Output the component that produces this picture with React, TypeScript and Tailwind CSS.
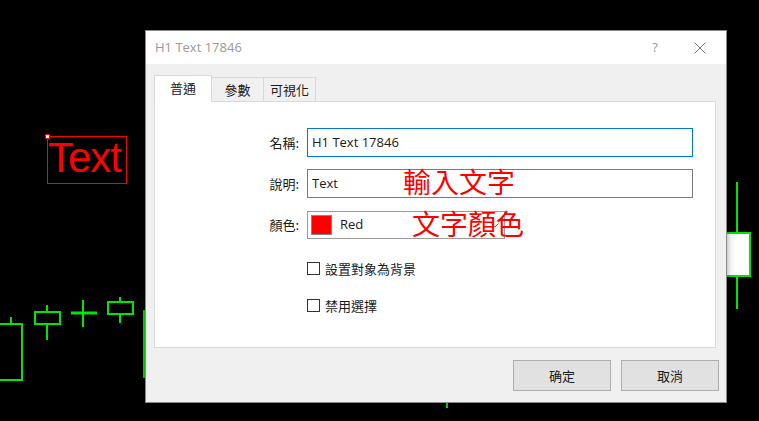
import React from "react";

const UI = { fontFamily: '"Open Sans", "Noto Sans CJK TC", sans-serif' };
const CJK = { fontFamily: '"Noto Sans CJK TC", "Open Sans", sans-serif' };

// Candles behind the dialog, drawn as one chart layer.
function Chart() {
  const g = "#00e600";
  return (
    <svg className="absolute inset-0" width={759} height={421} viewBox="0 0 759 421">
      <line x1={11} y1={317} x2={11} y2={323} stroke={g} strokeWidth={2} />
      <rect x={-2} y={324} width={24} height={56} fill="none" stroke={g} strokeWidth={2} />
      <line x1={47} y1={305} x2={47} y2={340} stroke={g} strokeWidth={2} />
      <rect x={35} y={312} width={25} height={12} fill="#000" stroke={g} strokeWidth={2} />
      <line x1={71} y1={313} x2={97} y2={313} stroke={g} strokeWidth={3} />
      <line x1={83} y1={300} x2={83} y2={327} stroke={g} strokeWidth={2} />
      <line x1={120} y1={297} x2={120} y2={323} stroke={g} strokeWidth={2} />
      <rect x={108} y={302} width={25} height={12} fill="#000" stroke={g} strokeWidth={2} />
      <rect x={144} y={311} width={30} height={66} fill="none" stroke={g} strokeWidth={2} />
      <line x1={737} y1={182} x2={737} y2={309} stroke={g} strokeWidth={2} />
      <defs>
        <linearGradient id="shade" x1="0" x2="1" y1="0" y2="0">
          <stop offset="0" stopColor="#bdbdbd" />
          <stop offset="0.55" stopColor="#ffffff" />
        </linearGradient>
      </defs>
      <rect x={705} y={233} width={45} height={43} fill="url(#shade)" stroke={g} strokeWidth={2} />
      <line x1={447} y1={402} x2={447} y2={408} stroke={g} strokeWidth={2} />
    </svg>
  );
}

function Field({ label, children }: { label: string; children: React.ReactNode }) {
  return (
    <div className="flex items-center">
      <span className="w-[145px] pr-px text-right text-[13px] text-[#1a1a1a]" style={CJK}>
        {label}
      </span>
      <div className="ml-[7px]">{children}</div>
    </div>
  );
}

function Check({ label }: { label: string }) {
  return (
    <div className="ml-[152px] flex items-center gap-[5px]">
      <span className="h-[13px] w-[13px] border border-[#333] bg-white" />
      <span className="text-[13px] leading-[15px] text-[#1a1a1a]" style={CJK}>
        {label}
      </span>
    </div>
  );
}

function Dialog() {
  return (
    <div
      className="absolute left-[145px] top-[30px] flex h-[373px] w-[582px] flex-col border border-[#8a8a8a] bg-[#f0f0f0] shadow-[0_0_8px_rgba(0,0,0,0.35)]"
      style={UI}
    >
      <div className="flex h-[33px] items-center bg-white pl-[9px]">
        <span className="flex-1 text-[13px] text-[#999]">H1 Text 17846</span>
        <span className="w-[20px] text-center text-[13px] text-[#9a9a9a]">?</span>
        <span className="ml-[28px] mr-[19px] flex w-[14px] justify-center">
          <svg width={12} height={12} viewBox="0 0 12 12">
            <path d="M0.5 0.5 L11.5 11.5 M11.5 0.5 L0.5 11.5" stroke="#777" strokeWidth={1} />
          </svg>
        </span>
      </div>

      <div className="flex flex-1 flex-col pl-[8px] pt-[11px]">
        <div className="relative z-10 flex items-start">
          <div
            className="flex h-[27px] w-[58px] items-center justify-center border border-b-0 border-[#d9d9d9] bg-white pb-[3px] text-[13px] text-[#1a1a1a]"
            style={CJK}
          >
            普通
          </div>
          <div
            className="mt-[2px] flex h-[24px] w-[52px] items-center justify-center border border-l-0 border-b-0 border-[#d9d9d9] text-[13px] text-[#1a1a1a]"
            style={CJK}
          >
            參數
          </div>
          <div
            className="mt-[2px] flex h-[24px] w-[52px] items-center justify-center border border-l-0 border-b-0 border-[#d9d9d9] text-[13px] text-[#1a1a1a]"
            style={CJK}
          >
            可視化
          </div>
        </div>

        <div className="-mt-px flex h-[247px] w-[562px] flex-col border border-[#dadada] bg-white pt-[26px]">
          <Field label="名稱:">
            <div className="flex h-[29px] w-[386px] items-center border border-[#0078d7] pl-[4px] text-[13px] text-[#1a1a1a]">
              H1 Text 17846
            </div>
          </Field>
          <div className="mt-[12px]">
            <Field label="說明:">
              <div className="flex h-[29px] w-[386px] items-center border border-[#7a7a7a] pl-[4px] text-[13px] text-[#1a1a1a]">
                Text
              </div>
            </Field>
          </div>
          <div className="mt-[13px]">
            <Field label="顏色:">
              <div className="flex h-[28px] w-[198px] items-center border border-[#9a9a9a] pl-[3px] text-[13px] text-[#1a1a1a]">
                <span className="h-[20px] w-[21px] border border-[#888] bg-[#ff0000]" />
                <span className="ml-[8px] flex-1">Red</span>
                <svg width={8} height={5} viewBox="0 0 8 5" className="mr-[5px]">
                  <path d="M0.5 0.5 L4 4 L7.5 0.5" fill="none" stroke="#666" />
                </svg>
              </div>
            </Field>
          </div>
          <div className="mt-[22px]">
            <Check label="設置對象為背景" />
          </div>
          <div className="mt-[22px]">
            <Check label="禁用選擇" />
          </div>
        </div>

        <div className="mt-[12px] flex justify-end gap-[10px] pr-[7px]">
          <button className="h-[31px] w-[98px] border border-[#adadad] bg-[#e1e1e1] text-[13px] text-[#1a1a1a]" style={CJK}>
            确定
          </button>
          <button className="h-[31px] w-[98px] border border-[#adadad] bg-[#e1e1e1] text-[13px] text-[#1a1a1a]" style={CJK}>
            取消
          </button>
        </div>
      </div>

      <span className="absolute left-[257px] top-[136px] text-[28px] leading-none text-[#ff0000]" style={CJK}>
        輸入文字
      </span>
      <span className="absolute left-[266px] top-[178px] text-[28px] leading-none text-[#ff0000]" style={CJK}>
        文字顏色
      </span>
    </div>
  );
}

export default function App() {
  return (
    <div className="relative h-[421px] w-[759px] overflow-hidden bg-black">
      <Chart />
      <div className="absolute left-[47px] top-[136px] h-[48px] w-[80px] border border-[#ff0000]">
        <span
          className="block text-[42px] leading-none tracking-[-1px] text-[#ff0000]"
          style={{ fontFamily: '"Liberation Sans", Arial, sans-serif' }}
        >
          Text
        </span>
      </div>
      <span className="absolute left-[45px] top-[134px] h-[5px] w-[5px] border border-[#ff0000] bg-white" />
      <Dialog />
    </div>
  );
}
